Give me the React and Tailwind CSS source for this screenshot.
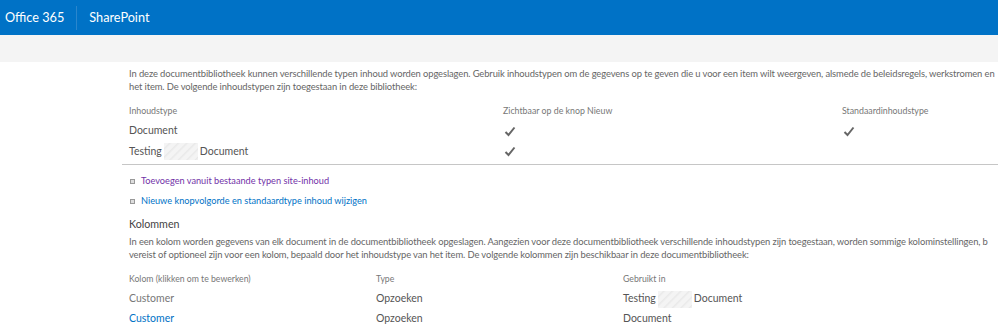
import React from 'react';

const font = { fontFamily: 'Lato, "Open Sans", sans-serif' };

const Blur = () => (
  <span className="inline-block w-[34px] h-[17px] mx-[2px] bg-[repeating-linear-gradient(135deg,#f4f4f4_0px,#f4f4f4_3px,#e9e9e9_4px,#f4f4f4_6px)]"></span>
);

const Check = () => (
  <svg width="12" height="11" viewBox="0 0 12 11" className="block">
    <path d="M1.5 6 L4.5 9 L10.5 1.5" fill="none" stroke="#666" strokeWidth="2" />
  </svg>
);

const Bullet = () => (
  <span className="inline-block w-[5px] h-[5px] border border-[#999] bg-[#ddd] mr-[6px]"></span>
);

const App = () => {
  return (
    <div className="w-[998px] h-[327px] overflow-hidden bg-white" style={font}>
      {/* top bar */}
      <div className="h-[35px] bg-[#0072c6] flex items-center text-white">
        <span className="pl-[5px] text-[12.7px]">Office 365</span>
        <span className="ml-[12px] w-px h-[24px] bg-[#2a86cd]"></span>
        <span className="ml-[12px] text-[12.7px]">SharePoint</span>
      </div>
      <div className="h-[27px] bg-[#f4f4f4]"></div>

      <div className="pl-[122px] pt-[5px] text-[#666]">
        <div className="pl-[7px] text-[9.4px] leading-[13px] tracking-[-0.1px] whitespace-nowrap">
          <div>In deze documentbibliotheek kunnen verschillende typen inhoud worden opgeslagen. Gebruik inhoudstypen om de gegevens op te geven die u voor een item wilt weergeven, alsmede de beleidsregels, werkstromen en</div>
          <div>het item. De volgende inhoudstypen zijn toegestaan in deze bibliotheek:</div>
        </div>

        {/* content types table */}
        <div className="mt-[8px] border-b border-[#c6c6c6] pb-[2px]">
          <div className="grid grid-cols-[374px_339px_1fr] pl-[7px] text-[8.8px] h-[20px] items-center text-[#777]">
            <span>Inhoudstype</span>
            <span>Zichtbaar op de knop Nieuw</span>
            <span>Standaardinhoudstype</span>
          </div>
          <div className="grid grid-cols-[374px_339px_1fr] pl-[7px] text-[10.5px] h-[20px] items-center text-[#555]">
            <span>Document</span>
            <span className="pl-[1px]"><Check /></span>
            <span className="pl-[1px]"><Check /></span>
          </div>
          <div className="grid grid-cols-[374px_339px_1fr] pl-[7px] text-[10.5px] h-[21px] items-center text-[#555]">
            <span className="flex items-center">Testing<Blur />Document</span>
            <span className="pl-[1px]"><Check /></span>
            <span></span>
          </div>
        </div>

        {/* links */}
        <div className="pl-[8px] pt-[6px] text-[9.2px]">
          <div className="h-[20px] flex items-center text-[#7232a8]"><Bullet />Toevoegen vanuit bestaande typen site-inhoud</div>
          <div className="h-[20px] flex items-center text-[#0072c6]"><Bullet />Nieuwe knopvolgorde en standaardtype inhoud wijzigen</div>
        </div>

        <div className="pl-[7px] mt-[4px] text-[10.7px] text-[#444] h-[18px] flex items-center">Kolommen</div>

        <div className="pl-[7px] mt-[2px] text-[9.4px] leading-[13px] tracking-[-0.1px] whitespace-nowrap">
          <div>In een kolom worden gegevens van elk document in de documentbibliotheek opgeslagen. Aangezien voor deze documentbibliotheek verschillende inhoudstypen zijn toegestaan, worden sommige kolominstellingen, b</div>
          <div>vereist of optioneel zijn voor een kolom, bepaald door het inhoudstype van het item. De volgende kolommen zijn beschikbaar in deze documentbibliotheek:</div>
        </div>

        {/* columns table */}
        <div className="mt-[8px]">
          <div className="grid grid-cols-[247px_247px_1fr] pl-[7px] text-[8.7px] h-[20px] items-center text-[#777]">
            <span>Kolom (klikken om te bewerken)</span>
            <span>Type</span>
            <span>Gebruikt in</span>
          </div>
          <div className="grid grid-cols-[247px_247px_1fr] pl-[7px] text-[10.5px] h-[20px] items-center text-[#555]">
            <span className="text-[#777]">Customer</span>
            <span>Opzoeken</span>
            <span className="flex items-center">Testing<Blur />Document</span>
          </div>
          <div className="grid grid-cols-[247px_247px_1fr] pl-[7px] text-[10.5px] h-[20px] items-center text-[#555]">
            <span className="text-[#0072c6]">Customer</span>
            <span>Opzoeken</span>
            <span>Document</span>
          </div>
        </div>
      </div>
    </div>
  );
};

export default App;
